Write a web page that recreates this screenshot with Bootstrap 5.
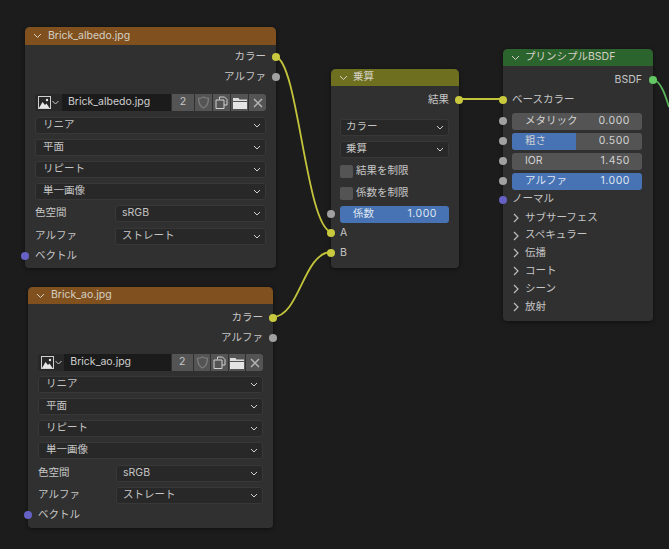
<!DOCTYPE html>
<html lang="ja">
<head>
<meta charset="utf-8">
<title>Nodes</title>
<link href="https://cdn.jsdelivr.net/npm/bootstrap@5.3.0/dist/css/bootstrap.min.css" rel="stylesheet">
<style>
html,body{margin:0;height:100%;background:#1c1c1c;overflow:hidden}
body{font-family:"Inter","Noto Sans CJK JP",sans-serif;font-size:10.5px;line-height:1;color:#c6c6c6}
.canvas{position:relative;width:669px;height:549px}
.wires{position:absolute;left:0;top:0}
.nd{position:absolute;background:#303030;border:0;border-radius:4px;box-shadow:0 1px 4px rgba(0,0,0,.45);color:#c6c6c6;--bs-card-bg:#303030}
.nd-a{left:25px;top:27px;width:251px;height:241px}
.nd-b{left:28px;top:287px;width:245px;height:241px}
.nd-c{left:331px;top:69px;width:128px;height:199px}
.nd-d{left:503px;top:49px;width:150px;height:272px}
.hd{height:17px;padding:0 0 0 8px;gap:6px;border-radius:4px 4px 0 0;border:0;color:#d4d0c4;font-size:10.5px}
.nd-a .hd{height:18px}
.nd-c .hd,.nd-d .hd{gap:5px}
.hd-img{background:#80501f}
.hd-mix{background:#6f701f}
.hd-sh{background:#2b642c}
.bd{padding:4px 10px 0}
.nd-a .bd{padding:2px 10px 0}
.rw{height:20px;position:relative}
.gp{gap:5px}
.drops{margin-top:6px}
.nd-b .drops{margin-top:5px}
.row-shift{margin-top:1px}
.vec-gap{margin-top:1px}
.sk{position:absolute;width:8px;height:8px;border-radius:50%;top:6px}
.sk-r{right:-14px}
.sk-l{left:-14px}
.yl{background:#c9c93f}
.gy{background:#a1a1a1}
.pu{background:#6561c4}
.gr{background:#63c763}
.sel{height:17px;background:#282828;border:1px solid #383838;border-radius:3px;padding:0 4px 0 7px;color:#c4c4c4}
.sel-n{padding-left:6px}
.lbl-w{width:80px;flex:none}
.lbl-b{width:78px;flex:none}
.imgrow{height:17px;margin:7px 0 0}
.nd-b .imgrow{margin-top:6px}
.pic{width:27px;height:17px;background:#282828;border-radius:3px 0 0 3px;gap:1px;padding-left:3px}
.fname{width:109px;height:17px;background:#1b1b1b;padding-left:6px;color:#cfcfcf;margin-right:1px}
.ibtn{height:17px;width:17px;background:#545454;color:#c8c8c8;margin-right:1px}
.ibtn:last-child{margin-right:0;border-radius:0 3px 3px 0}
.ibtn-n{width:22px}
.chk{width:13px;height:13px;background:#545454;border-radius:2px;flex:none}
.cr{height:22px;gap:3px}
.cr-first{margin-top:2px}
.sl{height:17px;background:#545454;border-radius:3px;padding:0 12px 0 13px;position:relative;overflow:hidden;color:#d2d2d2}
.sl-blue{background:#4772b3;color:#dfe6f2}
.sl-fill{position:absolute;left:0;top:0;bottom:0;background:#4772b3}
.sl>span{position:relative}
.num{letter-spacing:.5px}
.sub{height:17.8px;gap:6px;padding-left:1px}
.p-mix{padding:4px 10px 0 9px}
.p-mix .sel{padding-left:5px}
.p-mix .drops{margin-top:9px}
.fac{margin-top:2px}
.sk-r2{right:-14px}
.sk-l2{left:-13px}
.sk-mid{top:4px}
.p-sh{padding:4px 11px 0 9px}
.sliders{gap:3px;margin-top:3px}
.sk-r3{right:-15px}
.sk-l3{left:-13px}
.nm{height:19px}
.nm .sk{top:6px}
.fill-half{width:64px}
</style>
</head>
<body>
<div class="canvas">
<svg class="wires" width="669" height="549" fill="none" stroke-width="1.8">
  <path d="M276 57C298 62 306 226 331 232" stroke="#c4c43c"/>
  <path d="M273 317C300 316 303 253 331 252" stroke="#c4c43c"/>
  <path d="M459 99H503" stroke="#c4c43c"/>
  <path d="M653 79C661 82 665 94 669 107" stroke="#58b058"/>
</svg>

<!-- Brick_albedo -->
<div class="card nd nd-a">
  <div class="card-header hd hd-img d-flex align-items-center"><svg width="9" height="6" viewBox="0 0 9 6" fill="none" stroke="#d4d0c4"><path d="M1 1l3.500 3.500L8 1"/></svg><span>Brick_albedo.jpg</span></div>
  <div class="card-body bd">
    <div class="rw d-flex align-items-center justify-content-end"><span>カラー</span><i class="sk sk-r yl"></i></div>
    <div class="rw d-flex align-items-center justify-content-end"><span>アルファ</span><i class="sk sk-r gy"></i></div>
    <div class="imgrow d-flex align-items-center">
      <div class="pic d-flex align-items-center"><svg width="13" height="13" viewBox="0 0 13 13"><rect x=".5" y=".5" width="12" height="12" fill="none" stroke="#d0d0d0"/><path d="M1 12l3.500-6 2.500 3 1.500-1.500 3 4.500z" fill="#e6e6e6"/><circle cx="9" cy="4" r="1.200" fill="#e6e6e6"/></svg><svg width="7" height="5" viewBox="0 0 7 5" fill="none" stroke="#c8c8c8"><path d="M.5 1l3 3 3-3"/></svg></div>
      <div class="fname d-flex align-items-center">Brick_albedo.jpg</div>
      <div class="ibtn ibtn-n d-flex align-items-center justify-content-center">2</div>
      <div class="ibtn d-flex align-items-center justify-content-center"><svg width="13" height="13" viewBox="0 0 13 13" fill="none" stroke="#7b7b7b" stroke-width="1.300"><path d="M6.500 1C5 2 3 2.300 1.500 2.300c0 5 1.500 8 5 9.700 3.500-1.700 5-4.700 5-9.700C10 2.300 8 2 6.500 1z"/></svg></div>
      <div class="ibtn d-flex align-items-center justify-content-center"><svg width="13" height="13" viewBox="0 0 13 13" fill="none" stroke="#d0d0d0"><path d="M4.500 3.500V1h5l2.500 2.500V9H9"/><path d="M1 4h8v8.500H1z"/></svg></div>
      <div class="ibtn d-flex align-items-center justify-content-center"><svg width="14" height="12" viewBox="0 0 14 12"><path d="M0 1h5.500l1 1.500H14V4H0z" fill="#dcdcdc"/><path d="M0 5h14v7H0z" fill="#e4e4e4"/></svg></div>
      <div class="ibtn d-flex align-items-center justify-content-center"><svg width="10" height="10" viewBox="0 0 10 10" stroke="#b4b4b4" stroke-width="1.500"><path d="M1 1l8 8M9 1l-8 8"/></svg></div>
    </div>
    <div class="drops d-flex flex-column gp">
      <div class="sel d-flex align-items-center justify-content-between"><span>リニア</span><svg width="8" height="5" viewBox="0 0 8 5" fill="none" stroke="#d0d0d0"><path d="M1 1l3 3 3-3"/></svg></div>
      <div class="sel d-flex align-items-center justify-content-between"><span>平面</span><svg width="8" height="5" viewBox="0 0 8 5" fill="none" stroke="#d0d0d0"><path d="M1 1l3 3 3-3"/></svg></div>
      <div class="sel d-flex align-items-center justify-content-between"><span>リピート</span><svg width="8" height="5" viewBox="0 0 8 5" fill="none" stroke="#d0d0d0"><path d="M1 1l3 3 3-3"/></svg></div>
      <div class="sel d-flex align-items-center justify-content-between"><span>単一画像</span><svg width="8" height="5" viewBox="0 0 8 5" fill="none" stroke="#d0d0d0"><path d="M1 1l3 3 3-3"/></svg></div>
      <div class="d-flex align-items-center"><span class="lbl-w">色空間</span><div class="sel sel-n flex-grow-1 d-flex align-items-center justify-content-between"><span>sRGB</span><svg width="8" height="5" viewBox="0 0 8 5" fill="none" stroke="#d0d0d0"><path d="M1 1l3 3 3-3"/></svg></div></div>
      <div class="d-flex align-items-center row-shift"><span class="lbl-w">アルファ</span><div class="sel sel-n flex-grow-1 d-flex align-items-center justify-content-between"><span>ストレート</span><svg width="8" height="5" viewBox="0 0 8 5" fill="none" stroke="#d0d0d0"><path d="M1 1l3 3 3-3"/></svg></div></div>
    </div>
    <div class="rw d-flex align-items-center vec-gap"><span>ベクトル</span><i class="sk sk-l pu"></i></div>
  </div>
</div>

<!-- Brick_ao -->
<div class="card nd nd-b">
  <div class="card-header hd hd-img d-flex align-items-center"><svg width="9" height="6" viewBox="0 0 9 6" fill="none" stroke="#d4d0c4"><path d="M1 1l3.500 3.500L8 1"/></svg><span>Brick_ao.jpg</span></div>
  <div class="card-body bd">
    <div class="rw d-flex align-items-center justify-content-end"><span>カラー</span><i class="sk sk-r yl"></i></div>
    <div class="rw d-flex align-items-center justify-content-end"><span>アルファ</span><i class="sk sk-r gy"></i></div>
    <div class="imgrow d-flex align-items-center">
      <div class="pic d-flex align-items-center"><svg width="13" height="13" viewBox="0 0 13 13"><rect x=".5" y=".5" width="12" height="12" fill="none" stroke="#d0d0d0"/><path d="M1 12l3.500-6 2.500 3 1.500-1.500 3 4.500z" fill="#e6e6e6"/><circle cx="9" cy="4" r="1.200" fill="#e6e6e6"/></svg><svg width="7" height="5" viewBox="0 0 7 5" fill="none" stroke="#c8c8c8"><path d="M.5 1l3 3 3-3"/></svg></div>
      <div class="fname d-flex align-items-center">Brick_ao.jpg</div>
      <div class="ibtn ibtn-n d-flex align-items-center justify-content-center">2</div>
      <div class="ibtn d-flex align-items-center justify-content-center"><svg width="13" height="13" viewBox="0 0 13 13" fill="none" stroke="#7b7b7b" stroke-width="1.300"><path d="M6.500 1C5 2 3 2.300 1.500 2.300c0 5 1.500 8 5 9.700 3.500-1.700 5-4.700 5-9.700C10 2.300 8 2 6.500 1z"/></svg></div>
      <div class="ibtn d-flex align-items-center justify-content-center"><svg width="13" height="13" viewBox="0 0 13 13" fill="none" stroke="#d0d0d0"><path d="M4.500 3.500V1h5l2.500 2.500V9H9"/><path d="M1 4h8v8.500H1z"/></svg></div>
      <div class="ibtn d-flex align-items-center justify-content-center"><svg width="14" height="12" viewBox="0 0 14 12"><path d="M0 1h5.500l1 1.500H14V4H0z" fill="#dcdcdc"/><path d="M0 5h14v7H0z" fill="#e4e4e4"/></svg></div>
      <div class="ibtn d-flex align-items-center justify-content-center"><svg width="10" height="10" viewBox="0 0 10 10" stroke="#b4b4b4" stroke-width="1.500"><path d="M1 1l8 8M9 1l-8 8"/></svg></div>
    </div>
    <div class="drops d-flex flex-column gp">
      <div class="sel d-flex align-items-center justify-content-between"><span>リニア</span><svg width="8" height="5" viewBox="0 0 8 5" fill="none" stroke="#d0d0d0"><path d="M1 1l3 3 3-3"/></svg></div>
      <div class="sel d-flex align-items-center justify-content-between"><span>平面</span><svg width="8" height="5" viewBox="0 0 8 5" fill="none" stroke="#d0d0d0"><path d="M1 1l3 3 3-3"/></svg></div>
      <div class="sel d-flex align-items-center justify-content-between"><span>リピート</span><svg width="8" height="5" viewBox="0 0 8 5" fill="none" stroke="#d0d0d0"><path d="M1 1l3 3 3-3"/></svg></div>
      <div class="sel d-flex align-items-center justify-content-between"><span>単一画像</span><svg width="8" height="5" viewBox="0 0 8 5" fill="none" stroke="#d0d0d0"><path d="M1 1l3 3 3-3"/></svg></div>
      <div class="d-flex align-items-center row-shift"><span class="lbl-b">色空間</span><div class="sel sel-n flex-grow-1 d-flex align-items-center justify-content-between"><span>sRGB</span><svg width="8" height="5" viewBox="0 0 8 5" fill="none" stroke="#d0d0d0"><path d="M1 1l3 3 3-3"/></svg></div></div>
      <div class="d-flex align-items-center"><span class="lbl-b">アルファ</span><div class="sel sel-n flex-grow-1 d-flex align-items-center justify-content-between"><span>ストレート</span><svg width="8" height="5" viewBox="0 0 8 5" fill="none" stroke="#d0d0d0"><path d="M1 1l3 3 3-3"/></svg></div></div>
    </div>
    <div class="rw d-flex align-items-center vec-gap"><span>ベクトル</span><i class="sk sk-l pu"></i></div>
  </div>
</div>

<!-- Multiply -->
<div class="card nd nd-c">
  <div class="card-header hd hd-mix d-flex align-items-center"><svg width="9" height="6" viewBox="0 0 9 6" fill="none" stroke="#d4d0c4"><path d="M1 1l3.500 3.500L8 1"/></svg><span>乗算</span></div>
  <div class="card-body bd p-mix">
    <div class="rw d-flex align-items-center justify-content-end"><span>結果</span><i class="sk sk-r2 yl"></i></div>
    <div class="drops d-flex flex-column gp">
      <div class="sel d-flex align-items-center justify-content-between"><span>カラー</span><svg width="8" height="5" viewBox="0 0 8 5" fill="none" stroke="#d0d0d0"><path d="M1 1l3 3 3-3"/></svg></div>
      <div class="sel d-flex align-items-center justify-content-between"><span>乗算</span><svg width="8" height="5" viewBox="0 0 8 5" fill="none" stroke="#d0d0d0"><path d="M1 1l3 3 3-3"/></svg></div>
    </div>
    <div class="cr cr-first d-flex align-items-center"><i class="chk"></i><span>結果を制限</span></div>
    <div class="cr d-flex align-items-center"><i class="chk"></i><span>係数を制限</span></div>
    <div class="position-relative fac">
      <div class="sl sl-blue d-flex align-items-center justify-content-between"><span>係数</span><span class="num">1.000</span></div>
      <i class="sk sk-l2 gy sk-mid"></i>
    </div>
    <div class="rw d-flex align-items-center"><span>A</span><i class="sk sk-l2 yl"></i></div>
    <div class="rw d-flex align-items-center"><span>B</span><i class="sk sk-l2 yl"></i></div>
  </div>
</div>

<!-- Principled -->
<div class="card nd nd-d">
  <div class="card-header hd hd-sh d-flex align-items-center"><svg width="9" height="6" viewBox="0 0 9 6" fill="none" stroke="#d4d0c4"><path d="M1 1l3.500 3.500L8 1"/></svg><span>プリンシプルBSDF</span></div>
  <div class="card-body bd p-sh">
    <div class="rw d-flex align-items-center justify-content-end"><span>BSDF</span><i class="sk sk-r3 gr"></i></div>
    <div class="rw d-flex align-items-center"><span>ベースカラー</span><i class="sk sk-l3 yl"></i></div>
    <div class="sliders d-flex flex-column">
      <div class="position-relative"><div class="sl d-flex align-items-center justify-content-between"><span>メタリック</span><span class="num">0.000</span></div><i class="sk sk-l3 gy sk-mid"></i></div>
      <div class="position-relative"><div class="sl d-flex align-items-center justify-content-between"><div class="sl-fill fill-half"></div><span>粗さ</span><span class="num">0.500</span></div><i class="sk sk-l3 gy sk-mid"></i></div>
      <div class="position-relative"><div class="sl d-flex align-items-center justify-content-between"><span>IOR</span><span class="num">1.450</span></div><i class="sk sk-l3 gy sk-mid"></i></div>
      <div class="position-relative"><div class="sl sl-blue d-flex align-items-center justify-content-between"><span>アルファ</span><span class="num">1.000</span></div><i class="sk sk-l3 gy sk-mid"></i></div>
    </div>
    <div class="rw nm d-flex align-items-center"><span>ノーマル</span><i class="sk sk-l3 pu"></i></div>
    <div class="sub d-flex align-items-center"><svg width="6" height="10" viewBox="0 0 6 10" fill="none" stroke="#bdbdbd" stroke-width="1.200"><path d="M1 1l4 4-4 4"/></svg><span>サブサーフェス</span></div>
    <div class="sub d-flex align-items-center"><svg width="6" height="10" viewBox="0 0 6 10" fill="none" stroke="#bdbdbd" stroke-width="1.200"><path d="M1 1l4 4-4 4"/></svg><span>スペキュラー</span></div>
    <div class="sub d-flex align-items-center"><svg width="6" height="10" viewBox="0 0 6 10" fill="none" stroke="#bdbdbd" stroke-width="1.200"><path d="M1 1l4 4-4 4"/></svg><span>伝播</span></div>
    <div class="sub d-flex align-items-center"><svg width="6" height="10" viewBox="0 0 6 10" fill="none" stroke="#bdbdbd" stroke-width="1.200"><path d="M1 1l4 4-4 4"/></svg><span>コート</span></div>
    <div class="sub d-flex align-items-center"><svg width="6" height="10" viewBox="0 0 6 10" fill="none" stroke="#bdbdbd" stroke-width="1.200"><path d="M1 1l4 4-4 4"/></svg><span>シーン</span></div>
    <div class="sub d-flex align-items-center"><svg width="6" height="10" viewBox="0 0 6 10" fill="none" stroke="#bdbdbd" stroke-width="1.200"><path d="M1 1l4 4-4 4"/></svg><span>放射</span></div>
  </div>
</div>
</div>
<script src="https://cdn.jsdelivr.net/npm/bootstrap@5.3.0/dist/js/bootstrap.bundle.min.js"></script>
</body>
</html>
